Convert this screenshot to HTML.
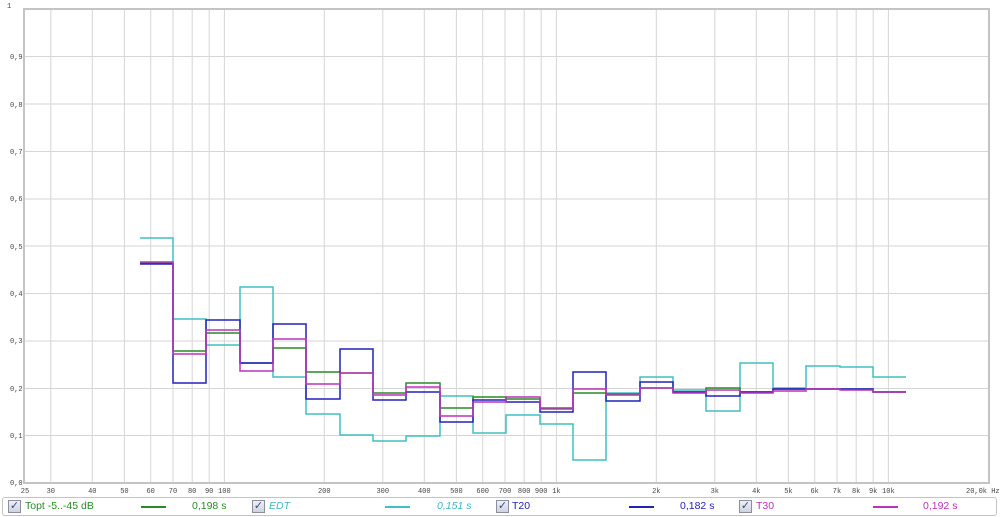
<!DOCTYPE html>
<html><head><meta charset="utf-8"><style>
html,body{margin:0;padding:0;background:#fff;width:1000px;height:517px;overflow:hidden;font-family:"Liberation Sans",sans-serif}
svg{position:absolute;left:0;top:0}
.lg{position:absolute;left:2px;top:497px;width:993px;height:17px;border:1px solid #c4c4c4;border-radius:3px;background:#fff}
.cb{position:absolute;top:2px;width:11px;height:11px;border:1px solid #8a8ea0;background:linear-gradient(#eef0f5,#cfd3de);font-size:11px;line-height:11px;text-align:center;color:#3a4a8a}
.t{position:absolute;top:2px;font-size:10.5px;line-height:13px}
.ln{position:absolute;top:8px;width:25px;height:2px}
</style></head><body>
<svg width="1000" height="497" xmlns="http://www.w3.org/2000/svg">
<g stroke="#d6d6d6" stroke-width="1">
<line x1="24" y1="56.5" x2="989" y2="56.5"/><line x1="24" y1="104" x2="989" y2="104"/><line x1="24" y1="151.5" x2="989" y2="151.5"/><line x1="24" y1="199" x2="989" y2="199"/><line x1="24" y1="246" x2="989" y2="246"/><line x1="24" y1="293.5" x2="989" y2="293.5"/><line x1="24" y1="341" x2="989" y2="341"/><line x1="24" y1="388.5" x2="989" y2="388.5"/><line x1="24" y1="435.5" x2="989" y2="435.5"/>
<g id="v">
<line x1="50.8" y1="9" x2="50.8" y2="483"/><line x1="92.3" y1="9" x2="92.3" y2="483"/><line x1="124.4" y1="9" x2="124.4" y2="483"/><line x1="150.7" y1="9" x2="150.7" y2="483"/><line x1="173" y1="9" x2="173" y2="483"/><line x1="192.2" y1="9" x2="192.2" y2="483"/><line x1="209.2" y1="9" x2="209.2" y2="483"/><line x1="224.4" y1="9" x2="224.4" y2="483"/><line x1="324.3" y1="9" x2="324.3" y2="483"/><line x1="382.8" y1="9" x2="382.8" y2="483"/><line x1="424.3" y1="9" x2="424.3" y2="483"/><line x1="456.4" y1="9" x2="456.4" y2="483"/><line x1="482.7" y1="9" x2="482.7" y2="483"/><line x1="505" y1="9" x2="505" y2="483"/><line x1="524.2" y1="9" x2="524.2" y2="483"/><line x1="541.2" y1="9" x2="541.2" y2="483"/><line x1="556.4" y1="9" x2="556.4" y2="483"/><line x1="656.3" y1="9" x2="656.3" y2="483"/><line x1="714.8" y1="9" x2="714.8" y2="483"/><line x1="756.3" y1="9" x2="756.3" y2="483"/><line x1="788.4" y1="9" x2="788.4" y2="483"/><line x1="814.7" y1="9" x2="814.7" y2="483"/><line x1="837" y1="9" x2="837" y2="483"/><line x1="856.2" y1="9" x2="856.2" y2="483"/><line x1="873.2" y1="9" x2="873.2" y2="483"/><line x1="888.4" y1="9" x2="888.4" y2="483"/>
</g></g>
<path d="M24 483V9H989V483Z" fill="none" stroke="#c4c4c4" stroke-width="2"/>
<g fill="none" stroke-width="1.5">
<path stroke="#40c0c0" d="M140 238H173V319H206V345H240V287H273V377H306V414H340V435H373V441H406V436H440V396H473V433H506V415H540V424H573V460H606V393H640V377H673V390H706V411H740V363H773V388H806V366H840V367H873V377H906"/>
<path stroke="#2a8a2a" d="M140 263H173V351H206V333H240V363H273V348H306V372H340V373H373V393H406V383H440V408H473V397H506V399H540V408H573V393H606V394H640V388H673V392H706V388H740V392H773V389H806V389H840V389H873V392H906"/>
<path stroke="#2222bb" d="M140 264H173V383H206V320H240V363H273V324H306V399H340V349H373V400H406V392H440V422H473V400H506V402H540V412H573V372H606V401H640V382H673V392H706V396H740V392H773V389H806V389H840V389H873V392H906"/>
<path stroke="#bb33bb" d="M140 262H173V354H206V330H240V371H273V339H306V384H340V373H373V395H406V387H440V416H473V402H506V397H540V409H573V389H606V395H640V388H673V393H706V390H740V393H773V391H806V389H840V390H873V392H906"/>
</g>
<g font-family="Liberation Mono,monospace" font-size="7" fill="#444">
<text x="7" y="8">1</text>
<text x="10" y="59">0,9</text><text x="10" y="107">0,8</text><text x="10" y="154">0,7</text><text x="10" y="201">0,6</text><text x="10" y="249">0,5</text><text x="10" y="296">0,4</text><text x="10" y="343">0,3</text><text x="10" y="391">0,2</text><text x="10" y="438">0,1</text><text x="10" y="485">0,0</text>
<g text-anchor="middle">
<text x="25" y="493">25</text><text x="50.8" y="493">30</text><text x="92.3" y="493">40</text><text x="124.4" y="493">50</text><text x="150.7" y="493">60</text><text x="173" y="493">70</text><text x="192.2" y="493">80</text><text x="209.2" y="493">90</text><text x="224.4" y="493">100</text><text x="324.3" y="493">200</text><text x="382.8" y="493">300</text><text x="424.3" y="493">400</text><text x="456.4" y="493">500</text><text x="482.7" y="493">600</text><text x="505" y="493">700</text><text x="524.2" y="493">800</text><text x="541.2" y="493">900</text><text x="556.4" y="493">1k</text><text x="656.3" y="493">2k</text><text x="714.8" y="493">3k</text><text x="756.3" y="493">4k</text><text x="788.4" y="493">5k</text><text x="814.7" y="493">6k</text><text x="837" y="493">7k</text><text x="856.2" y="493">8k</text><text x="873.2" y="493">9k</text><text x="888.4" y="493">10k</text>
</g>
<text x="966" y="493">20,0k Hz</text>
</g>
</svg>
<div class="lg">
<div class="cb" style="left:5px">✓</div><div class="t" style="left:22px;color:#2a8a2a">Topt -5..-45 dB</div><div class="ln" style="left:138px;background:#2a8a2a"></div><div class="t" style="left:189px;color:#2a8a2a">0,198 s</div>
<div class="cb" style="left:249px">✓</div><div class="t" style="left:266px;color:#40b8c0;font-style:italic">EDT</div><div class="ln" style="left:382px;background:#40c0c0"></div><div class="t" style="left:434px;color:#40b8c0;font-style:italic">0,151 s</div>
<div class="cb" style="left:493px">✓</div><div class="t" style="left:509px;color:#2222bb">T20</div><div class="ln" style="left:626px;background:#2222bb"></div><div class="t" style="left:677px;color:#2222bb">0,182 s</div>
<div class="cb" style="left:736px">✓</div><div class="t" style="left:753px;color:#bb33bb">T30</div><div class="ln" style="left:870px;background:#bb33bb"></div><div class="t" style="left:920px;color:#bb33bb">0,192 s</div>
</div>
</body></html>
